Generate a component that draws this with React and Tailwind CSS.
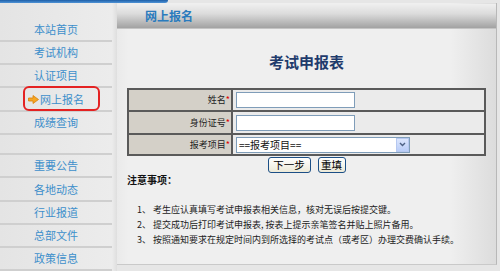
import React from 'react';

const font = { fontFamily: '"Noto Sans CJK SC", "Liberation Sans", sans-serif' };

const groupA = [
  { label: '本站首页', h: 'h-[23px]' },
  { label: '考试机构', h: 'h-[23px]' },
  { label: '认证项目', h: 'h-[23px]' },
  { label: '网上报名', h: 'h-[24px]', active: true },
  { label: '成绩查询', h: 'h-[23px]' },
];

const groupB = [
  { label: '重要公告', h: 'h-[23px]' },
  { label: '各地动态', h: 'h-[24px]' },
  { label: '行业报道', h: 'h-[23px]' },
  { label: '总部文件', h: 'h-[23px]' },
  { label: '政策信息', h: 'h-[23px]' },
];

function Arrow() {
  return (
    <svg width="11" height="9" viewBox="0 0 11 9" className="mr-[1px]">
      <path d="M0.5 3 H5 V0.5 L10.5 4.5 L5 8.5 V6 H0.5 Z" fill="#f5a623" stroke="#d9820b" strokeWidth="0.8" />
    </svg>
  );
}

function NavItem({ item }) {
  return (
    <div className={`relative ${item.h} box-border border-b-2 border-[#cfcfcf] flex items-center justify-center`}>
      {item.active && <Arrow />}
      <span className="text-[11px] leading-none text-[#3d8fcb]">{item.label}</span>
      {item.active && (
        <div className="absolute left-[23px] top-[-2px] w-[77px] h-[25px] border-2 border-[#e42222] rounded-[6px]" />
      )}
    </div>
  );
}

function Row({ label, children, h }) {
  return (
    <div className={`flex ${h}`}>
      <div className="w-[104px] bg-[#d4d0c8] border-r-2 border-[#5a5a5a] flex items-center justify-end pr-[1px] text-[9px] text-[#222]">
        {label}
        <span className="text-[#e00000] text-[9px]">*</span>
      </div>
      <div className="flex-1 bg-[#ebebeb] flex items-center pl-[3px]">{children}</div>
    </div>
  );
}

export default function App() {
  return (
    <div style={font} className="w-[500px] h-[271px] overflow-hidden bg-[#e6e6e6] flex flex-col">
      <div className="h-[4px] flex">
        <div className="w-[168px] h-[3px] rounded-br-[6px] bg-[linear-gradient(to_bottom,#1d5fa8,#4f93d6)]" />
      </div>
      <div className="flex flex-1">
        <div className="w-[112px] pt-[16px] bg-[linear-gradient(to_right,#e4e4e4,#ececec)]">
          {groupA.map((it) => (
            <NavItem key={it.label} item={it} />
          ))}
          <div className="h-[20px] box-border border-b-2 border-[#cfcfcf]" />
          {groupB.map((it) => (
            <NavItem key={it.label} item={it} />
          ))}
        </div>
        <div className="w-[5px] bg-[linear-gradient(to_right,#ececec,#dedede)]" />
        <div className="w-[380px] h-[262px] box-border border-b border-[#c9c9c9] flex flex-col bg-[linear-gradient(to_right,#eaeaea,#efefef_3%,#efefef_88%,#dcdcdc)] border-r border-r-[#b8b8b8]">
          <div className="mt-[1px] h-[25px] box-border border-b border-[#c4c4c4] bg-[linear-gradient(to_bottom,#efefef,#dcdcdc_40%,#a2a2a2)] flex items-center pl-[28px]">
            <span className="text-[12px] font-bold text-[#2a7bbd] leading-none">网上报名</span>
          </div>
          <div className="pt-[25px] text-center text-[15px] leading-[16px] font-bold text-[#1f3b6c]">考试申报表</div>
          <div className="mt-[18px] mx-[10px] border-2 border-[#5a5a5a] flex flex-col">
            <Row label="姓名" h="h-[20px]">
              <div className="w-[119px] h-[16px] bg-white border border-[#7f9db9]" />
            </Row>
            <div className="h-[2px] bg-[#5a5a5a]" />
            <Row label="身份证号" h="h-[21px]">
              <div className="w-[119px] h-[16px] bg-white border border-[#7f9db9]" />
            </Row>
            <div className="h-[2px] bg-[#5a5a5a]" />
            <Row label="报考项目" h="h-[19px]">
              <div className="w-[174px] h-[16px] bg-white border border-[#7f9db9] flex items-center">
                <span className="flex-1 pl-[2px] text-[10px] leading-none text-[#111]">==报考项目==</span>
                <div className="w-[13px] h-[14px] bg-[linear-gradient(to_bottom,#dce6fd,#b9cdf8)] border border-[#b6c8f0] flex items-center justify-center">
                  <svg width="7" height="5" viewBox="0 0 7 5">
                    <path d="M1 1 L3.5 3.5 L6 1" fill="none" stroke="#4d6185" strokeWidth="1.4" />
                  </svg>
                </div>
              </div>
            </Row>
          </div>
          <div className="mt-[1px] flex justify-center gap-[7px]">
            <button className="w-[43px] h-[16px] rounded-[3px] border border-[#1c4f86] bg-[linear-gradient(to_bottom,#ffffff,#ece9d8)] text-[10.5px] leading-none text-black">下一步</button>
            <button className="w-[28px] h-[16px] rounded-[3px] border border-[#1c4f86] bg-[linear-gradient(to_bottom,#ffffff,#ece9d8)] text-[10.5px] leading-none text-black">重填</button>
          </div>
          <div className="mt-[1px] pl-[10px] text-[10px] leading-[12px] font-bold text-[#111]">注意事项：</div>
          <div className="mt-[16px] pl-[20px] text-[9px] leading-[15px] text-[#222]">
            <div>1、 考生应认真填写考试申报表相关信息，核对无误后按提交键。</div>
            <div>2、 提交成功后打印考试申报表, 按表上提示亲笔签名并贴上照片备用。</div>
            <div>3、 按照通知要求在规定时间内到所选择的考试点（或考区）办理交费确认手续。</div>
          </div>
        </div>
      </div>
    </div>
  );
}
